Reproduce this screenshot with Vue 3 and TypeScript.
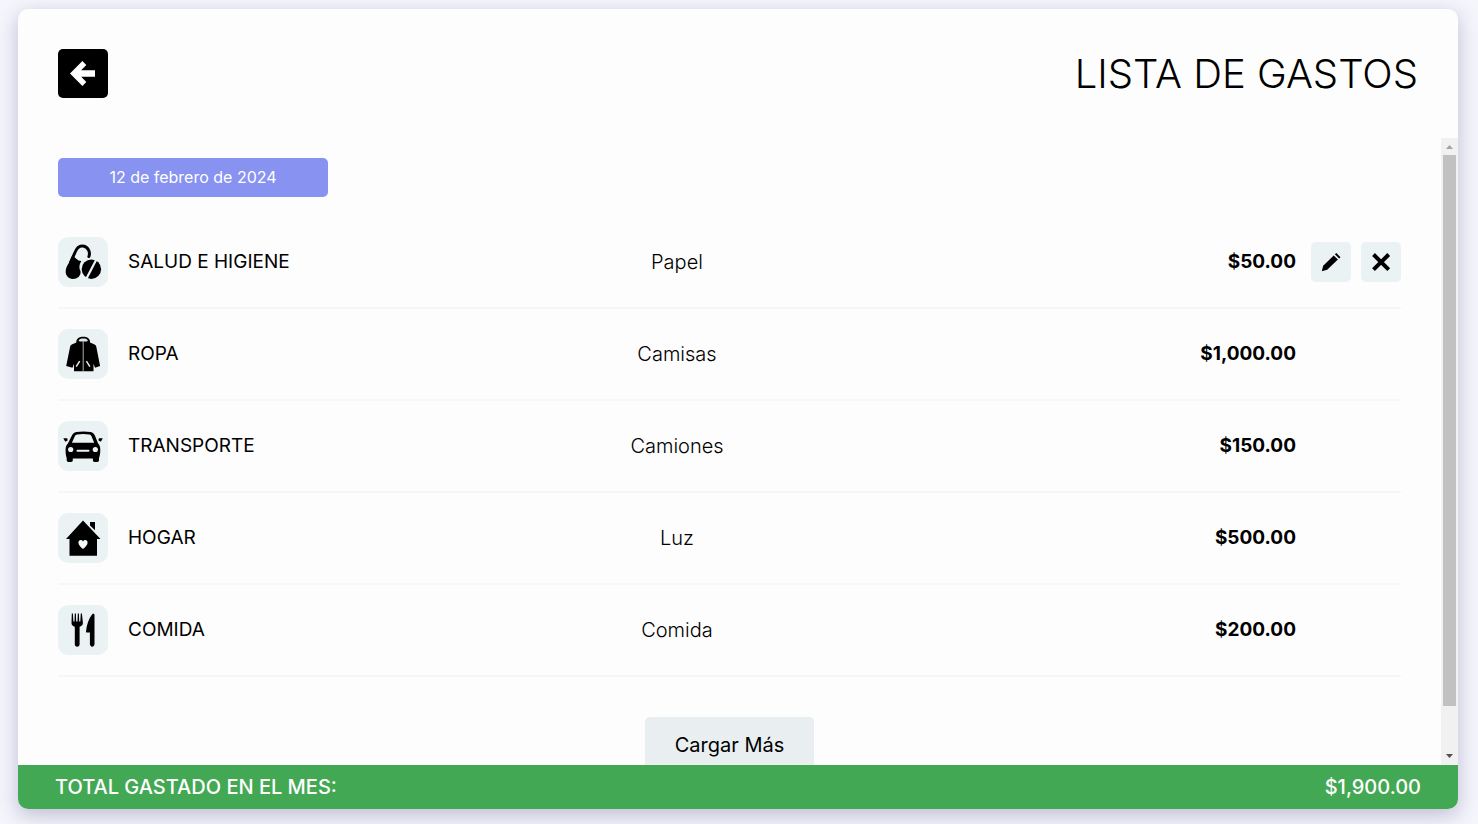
<script setup lang="ts">
import { computed, onMounted, onUnmounted, ref } from 'vue'

type IconName = 'salud' | 'ropa' | 'transporte' | 'hogar' | 'comida'

interface Expense {
  icon: IconName
  category: string
  description: string
  amount: number
  editable: boolean
}

const expenses = ref<Expense[]>([
  { icon: 'salud', category: 'Salud e higiene', description: 'Papel', amount: 50, editable: true },
  { icon: 'ropa', category: 'Ropa', description: 'Camisas', amount: 1000, editable: false },
  { icon: 'transporte', category: 'Transporte', description: 'Camiones', amount: 150, editable: false },
  { icon: 'hogar', category: 'Hogar', description: 'Luz', amount: 500, editable: false },
  { icon: 'comida', category: 'Comida', description: 'Comida', amount: 200, editable: false },
])

const total = computed(() => expenses.value.reduce((sum, e) => sum + e.amount, 0))

const money = (n: number): string =>
  '$' + n.toLocaleString('en-US', { minimumFractionDigits: 2, maximumFractionDigits: 2 })

const pane = ref<HTMLElement | null>(null)
const thumbSize = ref(90)
const thumbTop = ref(0)

function syncThumb(): void {
  const el = pane.value
  if (!el || el.scrollHeight === 0) return
  thumbSize.value = (el.clientHeight / el.scrollHeight) * 100
  thumbTop.value = (el.scrollTop / el.scrollHeight) * 100
}

function scrollPane(delta: number): void {
  pane.value?.scrollBy({ top: delta })
}

onMounted(() => {
  syncThumb()
  window.addEventListener('resize', syncThumb)
})
onUnmounted(() => window.removeEventListener('resize', syncThumb))
</script>

<template>
  <div class="page">
    <main class="card">
      <header class="header">
        <button class="back" type="button" aria-label="Regresar">
          <svg viewBox="0 0 50 49" aria-hidden="true">
            <path d="M12 24.500 24.400 12l3.900 3.900-5.100 5.300H37v6.600H23.200l5.100 5.300-3.900 3.900z" fill="#fff" />
          </svg>
        </button>
        <h1 class="title">Lista de Gastos</h1>
      </header>

      <div class="body">
        <section ref="pane" class="pane" @scroll="syncThumb">
          <h2 class="date">12 de febrero de 2024</h2>
          <ul class="list">
            <li v-for="item in expenses" :key="item.category" class="row">
              <div class="columns">
                <div class="category">
                  <span class="tile">
                    <svg v-if="item.icon === 'salud'" viewBox="0 0 50 50" aria-hidden="true">
                      <path d="M12.500 25.500 17.200 15C19.300 10 22.300 8.500 25.200 9.100c4.500.8 7.500 5.600 5.700 10.400" fill="none" stroke="#000" stroke-width="3" stroke-linecap="round" />
                      <path d="M11.100 25.500 14.300 18.500 20.500 23.500l2.800.4c-2.300 3.600-2.500 7.300-.7 10.500.4 4.500-3.400 7.600-7.700 7.500-4.600-.1-7.600-3.700-7.200-8.200.2-3 1.800-5.300 3.400-8.200z" />
                      <circle cx="33.400" cy="32.200" r="9.700" />
                      <path d="m28.500 41.500 9.700-18.700" stroke="#ebf2f3" stroke-width="2.200" />
                    </svg>
                    <svg v-else-if="item.icon === 'ropa'" viewBox="0 0 50 50" aria-hidden="true">
                      <path d="M18.300 13.500c0-4 3-5.700 6.900-5.700s6.900 1.700 6.900 5.700l4.500 2.100c1.100.6 1.500 1.400 1.800 2.700l3.700 18.600-5.100 1.900-1.500-4v7.500H16v-7.500l-1.500 4-6.300-1.900L12 18.300c.3-1.300.7-2.100 1.800-2.700z" />
                      <path d="M20.600 12c.4-1.900 2-2.400 4.600-2.400s4.300.5 4.700 2.400l-1.500.5h-6.300z" fill="#dfe5e6" />
                      <path d="M25.200 12v30.300" stroke="#a9afb0" />
                      <path d="m18.200 37.700 3.500-5.500m10.200 5.500-3.500-5.500" stroke="#e6ecee" stroke-width="1.500" />
                    </svg>
                    <svg v-else-if="item.icon === 'transporte'" viewBox="0 0 50 50" aria-hidden="true">
                      <path fill-rule="evenodd" d="M18.300 11c4.700-.8 9.600-.8 14.300 0 2.200.4 3.400 1.500 4.300 3.600l3.200 8c1.700 1.600 2.200 3.500 2.200 6.300 0 3-.4 5.600-1.300 8v2.400c0 1-.7 1.700-1.800 1.700h-2.600c-1.100 0-1.700-.7-1.700-1.700v-1.900H14.800v1.900c0 1-.7 1.700-1.800 1.700h-2.500c-1.100 0-1.800-.7-1.800-1.700v-2.400c-.9-2.400-1.100-5-1.100-8 0-2.800.6-4.700 2.300-6.300l4-8c1-2.100 2.200-3.200 4.400-3.600zm.8 2.600c-1.200.2-1.900.8-2.400 1.900l-2.800 6.200h22.300l-2.600-6.200c-.5-1.100-1.100-1.700-2.300-1.900-4.200-.7-8-.7-12.200 0z" />
                      <path d="M5.300 17.200h3.900l.5 2-1.800 1.300h-.8zm39.500 0h-3.900l-.5 2 1.800 1.300h.8z" />
                      <g fill="#ebf2f3">
                        <circle cx="12.700" cy="28.500" r="2.600" />
                        <circle cx="37.300" cy="28.500" r="2.600" />
                        <rect x="18.500" y="28.700" width="13" height="2" rx="1" />
                      </g>
                    </svg>
                    <svg v-else-if="item.icon === 'hogar'" viewBox="0 0 50 50" aria-hidden="true">
                      <path d="M25 7.500 42.500 26H39v16.700H11.500V26H8z" />
                      <path d="M32 9h5v8.200l-5-4.700z" />
                      <path d="M25 36c-2.600-2.200-4.600-4-4.600-6.500 0-2.900 3.300-3.300 4.600-1 1.300-2.300 4.600-1.900 4.600 1 0 2.500-2 4.300-4.600 6.500z" fill="#f4f8f9" />
                    </svg>
                    <svg v-else viewBox="0 0 50 50" aria-hidden="true">
                      <path d="M13.800 8.600h1.100l.5 7.900h1.100l.3-7.900h1.100l.3 7.900h1.300l.3-7.900h1.100l.3 7.900h1.100l.5-7.900h1.100l1 9.200c.2 2.100-1.300 3.300-3.300 4v17.400c0 1.500-.9 2.500-2.400 2.500s-2.400-1-2.400-2.500V21.800c-2-.7-3.500-1.900-3.300-4z" />
                      <path d="M34.200 9.200c1-.9 2.300-.4 2.300.9v29c0 1.500-.9 2.600-2.300 2.600s-2.300-1.100-2.300-2.600V27.500h-3.100c-.6 0-.9-.5-.8-1.100.7-6.700 2.700-13 6.200-17.200z" />
                    </svg>
                  </span>
                  <span class="name">{{ item.category }}</span>
                </div>
                <span class="description">{{ item.description }}</span>
                <span class="amount">{{ money(item.amount) }}</span>
              </div>
              <div class="actions">
                <template v-if="item.editable">
                  <button class="action" type="button" aria-label="Editar">
                    <svg viewBox="0 0 40 40" aria-hidden="true">
                      <path d="m22.700 13.400 4.200 4.100-10.700 10.300-5.400 1.400 1.400-5.500z" />
                      <path d="m23.900 12.300 1.400-1.200 4.200 4.100-1.400 1.200z" />
                    </svg>
                  </button>
                  <button class="action" type="button" aria-label="Eliminar">
                    <svg viewBox="0 0 40 40" aria-hidden="true">
                      <path d="m12.500 12.500 15.200 15.200m0-15.200L12.500 27.700" stroke="#000" stroke-width="4" />
                    </svg>
                  </button>
                </template>
              </div>
            </li>
          </ul>
          <button class="more" type="button">Cargar Más</button>
        </section>

        <div class="scrollbar" aria-hidden="true">
          <svg class="arrow" viewBox="0 0 17 17" @click="scrollPane(-40)"><path d="M5 11h7L8.500 7z" fill="#a3a3a3" /></svg>
          <div class="track">
            <div class="thumb" :style="{ height: thumbSize + '%', top: thumbTop + '%' }"></div>
          </div>
          <svg class="arrow" viewBox="0 0 17 17" @click="scrollPane(40)"><path d="M5 6h7l-3.500 4z" fill="#505050" /></svg>
        </div>
      </div>

      <footer class="total">
        <span>Total gastado en el mes:</span>
        <span>{{ money(total) }}</span>
      </footer>
    </main>
  </div>
</template>

<style>
body {
  margin: 0;
  background: #f5f5fc;
}
</style>

<style scoped>
* {
  box-sizing: border-box;
}

.page {
  height: 100vh;
  padding: 9px 20px 15px 18px;
  overflow: hidden;
  font-family: Inter, 'Open Sans', sans-serif;
  font-size: 19px;
  line-height: 24px;
  color: #000;
}

.card {
  display: flex;
  flex-direction: column;
  height: 100%;
  border-radius: 10px;
  background: #fdfdfd;
  box-shadow: 0 6px 20px rgba(60, 60, 120, 0.3);
}

.header {
  display: flex;
  flex: none;
  align-items: center;
  justify-content: space-between;
  padding: 40px;
}

.back {
  width: 50px;
  height: 49px;
  padding: 0;
  border: 0;
  border-radius: 5px;
  background: #000;
  cursor: pointer;
}

svg {
  display: block;
  width: 100%;
  height: 100%;
}

.title {
  margin: 0;
  font-size: 40px;
  line-height: 48px;
  font-weight: 300;
  text-transform: uppercase;
}

.body {
  display: flex;
  flex: 1;
  min-height: 0;
}

.pane {
  flex: 1;
  min-width: 0;
  padding: 20px 40px 40px;
  overflow-y: auto;
  scrollbar-width: none;
}

.date {
  width: 270px;
  margin: 0 0 20px;
  padding: 8px;
  border-radius: 5px;
  background: #8792f1;
  color: #fff;
  font-size: 16px;
  line-height: 23px;
  font-weight: 400;
  text-align: center;
}

.list {
  margin: 0 0 40px;
  padding: 0;
  list-style: none;
}

.row {
  display: flex;
  align-items: center;
  gap: 15px;
  padding: 20px 0;
  border-bottom: 2px solid #f6f7f7;
}

.columns {
  display: grid;
  flex: 1;
  grid-template-columns: repeat(3, 1fr);
  align-items: center;
}

.category {
  display: flex;
  align-items: center;
  gap: 20px;
}

.tile {
  flex: none;
  width: 50px;
  height: 50px;
  border-radius: 10px;
  background: #ebf2f3;
}

.name {
  text-transform: uppercase;
}

.description {
  font-size: 20px;
  font-weight: 300;
  text-align: center;
}

.amount {
  font-weight: 700;
  text-align: right;
}

.actions {
  display: flex;
  gap: 10px;
  width: 90px;
}

.action {
  width: 40px;
  height: 40px;
  padding: 0;
  border: 0;
  border-radius: 5px;
  background: #ebf2f3;
  cursor: pointer;
}

.more {
  display: block;
  margin: 0 auto;
  padding: 16px 30px;
  border: 0;
  border-radius: 5px;
  background: #e9eef1;
  color: #000;
  font: inherit;
  font-size: 20px;
  cursor: pointer;
}

.scrollbar {
  display: flex;
  flex: none;
  flex-direction: column;
  width: 17px;
  background: #f1f1f1;
}

.arrow {
  flex: none;
  height: 17px;
}

.track {
  position: relative;
  flex: 1;
}

.thumb {
  position: absolute;
  right: 2px;
  left: 2px;
  background: #c1c1c1;
}

.total {
  display: flex;
  flex: none;
  justify-content: space-between;
  padding: 10px 37px;
  border-radius: 0 0 10px 10px;
  background: #43a854;
  color: #fff;
  font-size: 20px;
  font-weight: 500;
  text-transform: uppercase;
}
</style>
